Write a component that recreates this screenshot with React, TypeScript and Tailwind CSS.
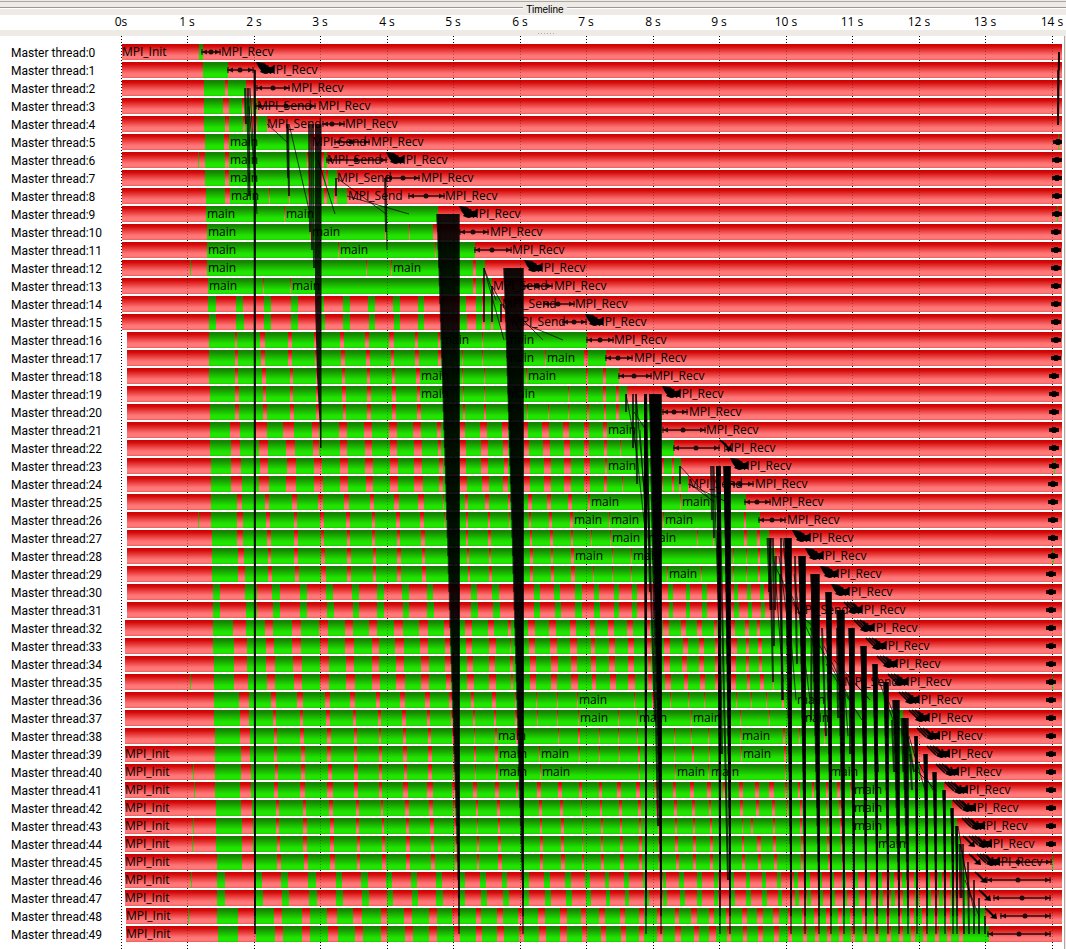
import React from "react";

/* Horizontal chart coordinates run from LEFT to LEFT + WIDTH. */
const LEFT = 121;
const TOP = 36;
const WIDTH = 941;
const HEIGHT = 913;
const ROW = 18;
const BAR = 16;

const rowTop = (r: number) => 44 + r * ROW;
const rowMid = (r: number) => rowTop(r) + 8;
const pct = (x: number) => `${((x - LEFT) / WIDTH) * 100}%`;

type Track = [start: number, computing: string, mpi: string];

const repeat = (from: number, to: number, step: number, width: number) => {
  const out: string[] = [];
  for (let x = from; x < to; x += step) out.push(`${x}-${x + width}`);
  return " " + out.join(" ");
};

/* Per thread: start of the bar, computing intervals, MPI intervals inside them. */
const tracks: Track[] = [
  [122, "199-203", ""],
  [122, "203-228", ""],
  [122, "204-246", "225-228"],
  [122, "204-257", "223-229 242-244 251-253"],
  [122, "204-267", "225-229 243-245 251-257"],
  [122, "205-309 1058-1059", "224-229"],
  [122, "198-199 205-327", "225-229 307-309 321-324"],
  [122, "205-337", "225-229 308-310 321-324 326-328"],
  [122, "206-347", "225-230 269-270 289-290 308-310 324-327 334-337"],
  [122, "206-438 1057-1058", "284-285"],
  [122, "207-433", "310-311 385-386 409-410"],
  [122, "207-475", "338-339 435-436"],
  [122, "190-191 207-485", "366-367 391-392 473-476"],
  [122, "208-492", "263-264 290-291 473-476 482-484"],
  [122, "208-216 236-243 264-271 291-298 321-324 343-350 368-375 393-400 418-424 460-466 476-482 485-491 493-501", ""],
  [122, "209-216 236-244 264-271 291-298 321-325 343-350 369-375 394-400 418-424 460-467 476-482 485-491 493-500", ""],
  [127, "209-587", "235-237 260-265 288-292 314-318 340-344 365-369 389-394 415-418 438-440 482-483"],
  [127, "209-606", "235-238 261-265 288-292 315-317 341-345 366-370 391-394 415-419 438-441 462-463 482-483 545-546 584-588"],
  [127, "209-619", "235-238 262-266 290-293 316-318 342-345 367-370 392-395 416-420 462-463 484-485 526-527 586-588 603-606"],
  [127, "210-627", "235-239 263-266 290-293 316-318 342-346 367-371 392-396 417-420 463-464 484-485 568-569 586-588 603-606 616-619"],
  [127, "210-662", "235-239 263-267 290-294 316-319 343-346 367-371 392-396 417-421 463-465 484-486 527-528 548-549 568-569 587-589 604-606 616-619"],
  [127, "210-662", "230-240 255-267 283-294 312-319 339-347 364-372 389-397 413-421 437-441 460-465 480-487 502-508 522-528 542-549 563-569 584-589 603-607"],
  [127, "210-674", "231-240 259-268 286-295 313-319 340-347 365-372 390-397 414-422 438-441 460-466 481-488 503-508 524-529 543-550 564-570 584-589 604-607 620-621"],
  [127, "211-681 1054-1055", "231-241 260-268 287-296 314-322 340-348 365-373 390-398 414-422 439-443 460-466 481-488 504-508 524-530 544-551 564-571 584-590 605-607 662-664 672-674"],
  [127, "211-688", "231-242 259-269 286-296 314-323 340-348 366-373 390-398 414-423 439-443 460-467 482-489 503-508 524-530 544-551 564-571 584-590 604-607 622-623 662-663 672-674 679-681"],
  [127, "211-746", "237-242 265-269 292-297 318-323 344-349 370-374 394-399 418-424 443-444 465-468 485-489 508-510 528-532 547-551 568-572 588-590 680-681"],
  [127, "198-199 211-760", "237-243 266-270 294-297 320-324 346-350 372-375 396-400 420-424 444-445 466-468 488-490 509-510 529-531 549-552 570-573 609-610 663-664 744-746"],
  [127, "212-769", "237-243 267-271 294-298 321-324 347-350 372-375 397-400 421-425 466-468 488-491 530-532 550-553 571-573 591-592 610-611 697-698 713-714 744-747 757-760"],
  [127, "212-775 1053-1054", "238-244 268-271 294-298 321-325 347-351 373-376 397-401 422-425 467-469 489-491 530-533 551-553 571-574 612-613 631-632 733-734 746-747 758-760"],
  [127, "212-781", "238-245 268-272 295-299 321-326 347-351 373-376 397-401 422-426 468-470 489-492 530-533 551-554 571-575 593-594 612-613 631-632 667-668 701-702 733-734 746-747 758-760"],
  [127, "213-220 245-257 272-280 300-307 326-333 352-359 377-384 402-409 427-433 471-477 492-499 534-540 554-560 575-582 594-599 614-619 632-637 668-673 686-690 702-707 734-738 747-751 760-764", ""],
  [127, "213-220 246-257 273-280 300-307 327-334 353-359 377-384 403-409 427-434 471-478 493-500 534-540 555-561 575-582 594-600 614-619 632-637 669-673 686-690 702-707 734-739 748-752 761-765", ""],
  [125, "213-818", "233-246 265-273 292-301 319-328 345-353 369-377 394-403 419-428 444-450 465-472 488-494 508-511 528-535 549-556 570-576 590-595 608-614 627-633 646-650 663-669 681-686 697-702 714-717 730-735 745-749 757-760"],
  [125, "213-823", "234-247 266-274 292-301 320-328 345-354 372-379 395-404 420-428 445-450 466-472 489-496 510-511 529-535 550-557 570-577 591-595 609-615 628-634 646-651 664-670 683-688 699-704 715-718 731-737 746-749 758-762"],
  [125, "214-828", "234-247 266-275 293-302 320-329 346-354 372-379 396-404 421-429 445-451 467-473 489-495 510-513 530-536 551-558 571-577 591-596 609-615 628-634 648-651 664-670 682-687 699-704 715-719 731-736 746-749 759-762"],
  [125, "190-191 214-840 1052-1053", "234-248 267-275 294-302 320-329 346-355 372-380 396-405 421-429 446-451 467-474 489-496 511-513 530-536 551-557 571-578 592-596 610-616 628-635 648-652 665-671 684-688 700-705 715-720 731-736 747-750 760-764 773-774"],
  [125, "214-888", "239-249 271-276 297-303 325-330 350-355 376-380 400-405 425-430 449-452 471-474 492-496 515-516 536-537 557-558 577-578 634-635 652-654 670-671 688-689 704-705 720-721 736-737 751-752 766-767 782-784"],
  [125, "214-903", "240-249 273-276 300-303 326-330 353-356 378-381 402-406 427-430 451-453 473-475 494-496 515-517 537-538 557-558 578-579 618-619 637-638 691-692 740-741 769-770"],
  [125, "215-909", "240-250 274-277 300-304 327-331 354-357 379-381 403-406 428-431 452-455 474-475 495-497 516-518 558-559 578-580 599-600 618-619 637-638 674-675 691-692 708-709 740-741 783-785 799-800 824-825"],
  [125, "215-913", "241-250 274-277 301-305 327-331 354-357 379-382 403-407 428-432 453-455 474-476 495-498 539-540 579-580 599-600 619-620 638-640 674-675 692-694 709-710 741-742 784-786"],
  [125, "193-194 215-920", "241-251 275-278 301-305 328-332 354-358 379-382 404-407 428-432 453-455 475-476 496-498 540-541 639-640 675-676 708-709 785-786"],
  [125, "194-195 215-944", "240-251 274-278 300-305 327-333 354-358 379-382 403-408 427-433 452-455 473-477 495-499 516-518 537-541 558-562 579-582 599-602 617-621 636-640 655-657 673-676 690-694 707-711 723-725 739-743 755-759 769-774 785-787 798-800 812-814 826-828 837-840 850-851"],
  [125, "216-952", "241-252 276-279 303-306 329-333 356-359 381-383 405-409 429-433 453-455 476-478 497-500 539-542 560-563 581-582 600-602 619-622 638-641 656-658 674-677 692-695 709-711 740-743 756-759 772-775 787-788 800-802 826-827 839-841"],
  [125, "193-194 216-957", "242-253 276-279 303-307 330-334 356-359 382-384 406-409 430-434 454-456 477-478 498-500 540-542 561-564 582-583 601-603 620-622 639-641 658-659 675-677 693-695 710-712 742-743 751-753 773-775 800-802 827-828 840-842"],
  [125, "192-193 216-960", "242-253 277-280 303-307 330-334 357-360 382-385 406-410 431-434 455-457 477-479 498-501 540-543 561-564 582-583 601-603 620-623 639-642 658-659 675-678 693-696 710-713 742-744 757-761 773-776 801-803 827-829 841-843"],
  [125, "217-964 1052-1053", "242-255 277-281 304-308 330-335 357-360 382-386 406-410 431-435 455-457 477-479 498-502 540-543 561-565 582-584 601-604 620-624 639-642 658-659 676-679 693-696 710-713 742-745 758-761 774-777 801-803 828-830 842-844"],
  [125, "191-192 217-225 254-262 281-288 308-316 336-342 361-368 386-392 411-417 436-442 460-465 480-486 502-507 524-529 544-550 565-571 585-590 605-609 624-629 643-647 663-666 679-684 697-702 714-718 731-734 746-750 762-766 777-781" + repeat(794, 966, 12, 4), ""],
  [125, "217-225 254-263 282-289 309-317 336-343 362-369 387-393 412-418 436-443 460-465 481-487 503-509 524-529 545-551 566-572 586-591 606-610 625-629 644-649 663-667 680-685 697-702 714-718 731-735 746-751 762-767 778-782" + repeat(795, 970, 12, 4), ""],
  [126, "188-189 217-985", "238-255 274-282 302-310 327-337 353-362 381-387 404-412 429-437 452-458 476-481 497-503 518-524 538-545 560-567 581-586 599-605 620-625 639-644 657-662 675-679 691-697 709-714 726-731 742-747 757-763 773-779 788-792" + repeat(802, 960, 12, 4)],
  [126, "218-989", "238-256 275-283 302-310 328-338 355-363 381-387 405-413 429-437 454-460 476-482 497-504 519-524 539-546 560-567 582-587 601-606 621-626 639-644 657-663 675-681 694-699 709-716 727-731 743-747 758-763 774-779 788-792" + repeat(803, 965, 12, 4)],
];

const spans = (list: string) =>
  list
    .trim()
    .split(/\s+/)
    .filter(Boolean)
    .map((s) => s.split("-").map(Number) as [number, number]);

const ticks = [121, 187, 254, 320, 387, 453, 520, 586, 653, 719, 786, 852, 919, 985, 1052];

const recvAt = [
  221, 265, 291, 318, 345, 371, 395, 421, 445, 468, 490, 512, 533, 554, 575, 594, 614, 634, 652, 671,
  689, 706, 723, 739, 755, 771, 787, 801, 814, 829, 840, 853, 865, 877, 888, 899, 910, 920, 930, 940,
  949, 958, 966, 975, 982, 990,
];

const sends: [row: number, x: number][] = [
  [3, 257], [4, 267], [5, 312], [6, 327], [7, 337], [8, 348], [13, 493], [14, 502], [15, 511],
  [24, 688], [31, 794], [35, 844],
];

const mains: [row: number, x: number][] = [
  [5, 230], [6, 230], [7, 230], [8, 231], [9, 207], [9, 286], [10, 208], [10, 312], [11, 208],
  [11, 340], [12, 208], [12, 393], [13, 209], [13, 292], [16, 441], [16, 506], [17, 506], [17, 547],
  [18, 421], [18, 528], [19, 421], [19, 507], [21, 608], [23, 608], [25, 591], [25, 682], [26, 574],
  [26, 611], [26, 665], [27, 612], [27, 648], [28, 575], [28, 633], [29, 669], [36, 579], [36, 797],
  [37, 580], [37, 639], [37, 693], [37, 801], [38, 498], [38, 742], [39, 499], [39, 541], [39, 743],
  [40, 499], [40, 542], [40, 677], [40, 711], [40, 830], [41, 854], [42, 854], [43, 854], [44, 878],
];

const labels: [row: number, x: number, text: string][] = [
  [0, 122, "MPI_Init"],
  ...Array.from({ length: 11 }, (_, i): [number, number, string] => [39 + i, i > 8 ? 126 : 125, "MPI_Init"]),
  ...mains.map(([r, x]): [number, number, string] => [r, x, "main"]),
  ...sends.map(([r, x]): [number, number, string] => [r, x, "MPI_Send"]),
  ...recvAt.map((x, r): [number, number, string] => [r, x, "MPI_Recv"]),
];

/* Double-headed markers: row, left tip, dot, right tip. */
const arrows: [number, number, number, number][] = [
  [0, 201, 211, 221], [1, 227, 240, 254], [2, 256, 273, 290], [3, 255, 286, 316], [4, 322, 332, 345],
  [5, 334, 351, 370], [6, 326, 356, 387], [7, 386, 403, 420], [8, 408, 426, 445], [10, 459, 473, 489],
  [11, 474, 492, 512], [13, 523, 537, 553], [14, 543, 558, 575], [15, 562, 574, 587], [16, 586, 600, 614],
  [17, 605, 618, 633], [18, 618, 634, 652], [20, 662, 674, 688], [21, 662, 683, 706], [22, 673, 696, 720],
  [24, 729, 740, 754], [25, 744, 757, 771], [26, 758, 772, 786], [45, 990, 1018, 1052],
  [46, 986, 1018, 1051], [47, 993, 1022, 1051], [48, 1000, 1025, 1051], [49, 987, 1019, 1051],
];

const swarms = [1, 6, 9, 12, 15, 19, 23, ...Array.from({ length: 19 }, (_, i) => 27 + i)];
const singles: [row: number, x: number][] = [
  [22, 720], [44, 963], [45, 969], [46, 975], [47, 979], [48, 985],
];

/* Message bundles: first and last x at the sending row. */
const fans: [row: number, x0: number, x1: number][] = [
  [9, 436, 460], [12, 503, 524], [19, 644, 647], [19, 649, 662], [23, 716, 721], [23, 723, 731],
  [27, 784, 792], [28, 798, 806], [29, 810, 820], [30, 825, 832], [31, 836, 845], [32, 848, 855],
  [33, 860, 867], [34, 872, 878], [35, 883, 889], [36, 892, 900], [37, 901, 909], [38, 914, 918],
  [39, 923, 928], [40, 932, 937], [41, 942, 946], [42, 950, 954], [43, 955, 958],
];

/* Single messages: x1, y1, x2, y2, stroke width. */
const messages: [number, number, number, number, number][] = [
  [254.5, 70, 255, 916, 2], [255, 70, 255, 934, 2],
  [245, 88, 246, 124, 2], [248, 88, 249, 196, 3], [250, 88, 257, 214, 1], [249, 106, 255, 180, 1],
  [267, 124, 287, 142, 1], [287, 124, 288, 178, 2], [288, 124, 289, 196, 2], [289, 124, 310, 214, 1],
  [309, 124, 310, 232, 2], [311, 124, 312, 250, 2], [313, 124, 314, 268, 2], [318, 160, 335, 214, 1],
  [336, 178, 336, 196, 2], [337, 178, 386, 214, 1], [347, 196, 409, 214, 1], [385, 178, 386, 232, 2],
  [386, 178, 387, 250, 1],
  [484, 268, 484, 322, 2], [484, 268, 504, 340, 1], [484, 268, 496, 300, 1], [492, 286, 492, 322, 2],
  [492, 286, 512, 322, 1], [501, 304, 501, 322, 2], [515, 312, 543, 340, 1], [520, 322, 563, 340, 1],
  [503, 304, 520, 330, 1],
  [626, 394, 626, 412, 2], [626, 394, 636, 448, 1], [633, 394, 633, 448, 2], [636, 394, 637, 484, 2],
  [634, 412, 646, 430, 1], [634, 430, 646, 538, 1], [636, 394, 645, 502, 1], [640, 430, 647, 538, 1],
  [645, 394, 655, 720, 2], [646, 394, 650, 592, 2], [650, 394, 658, 826, 2],
  [680, 466, 680, 484, 2], [680, 466, 711, 500, 1], [688, 484, 727, 502, 1], [690, 484, 714, 502, 1],
  [711, 466, 712, 520, 2], [713, 466, 714, 538, 2], [714, 466, 718, 600, 1],
  [717, 466, 722, 754, 2], [719, 466, 728, 880, 2],
  [768, 538, 771, 610, 3], [770, 538, 773, 682, 2], [773, 538, 774, 646, 2], [771, 538, 769, 592, 2],
  [774, 556, 783, 682, 1], [776, 556, 775, 610, 2], [781, 538, 782, 700, 2], [783, 538, 796, 700, 1],
  [780, 574, 783, 700, 2], [779, 556, 790, 640, 1], [795, 556, 797, 664, 2], [794, 574, 810, 700, 1],
  [775, 566, 797, 610, 1], [790, 592, 812, 640, 1], [795, 610, 815, 628, 1], [810, 628, 842, 686, 1],
  [812, 592, 811, 720, 2], [822, 628, 826, 736, 2], [824, 646, 850, 700, 1], [826, 664, 862, 720, 1],
  [837, 628, 838, 718, 2], [839, 610, 848, 736, 1], [834, 660, 870, 700, 1], [848, 676, 870, 700, 1],
  [850, 640, 850, 754, 2], [862, 680, 864, 754, 2], [874, 690, 878, 772, 2], [873, 664, 893, 720, 1],
  [884, 690, 900, 730, 1], [892, 720, 894, 772, 2], [901, 718, 903, 772, 1], [904, 718, 914, 772, 2],
  [909, 736, 925, 790, 1], [914, 754, 933, 790, 1], [910, 754, 912, 790, 2], [918, 772, 936, 790, 1],
  [960, 844, 961, 898, 3], [963, 844, 964, 934, 2], [968, 862, 969, 934, 2], [974, 880, 974, 934, 2],
  [979, 898, 979, 934, 2], [985, 916, 985, 934, 2], [958, 826, 970, 898, 1], [960, 844, 975, 916, 1],
  [965, 880, 979, 916, 1],
  [1059, 52, 1059, 70, 2], [1058, 70, 1058, 125, 2], [1059, 52, 1058, 125, 2],
];

function Bars() {
  return (
    <g shapeRendering="crispEdges">
      {tracks.map(([start, computing, mpi], r) => (
        <g key={r}>
          <rect x={start} y={rowTop(r)} width={1062 - start} height={BAR} fill="url(#mpi)" />
          {spans(computing).map(([a, b], i) => (
            <rect key={i} x={a} y={rowTop(r)} width={b - a} height={BAR} fill="url(#computing)" />
          ))}
          {spans(mpi).map(([a, b], i) => (
            <rect key={i} x={a} y={rowTop(r)} width={b - a} height={BAR} fill="url(#mpi)" />
          ))}
        </g>
      ))}
    </g>
  );
}

function Grid({ opacity }: { opacity: number }) {
  return (
    <g shapeRendering="crispEdges" fill="none" stroke="black" strokeDasharray="1 2" opacity={opacity}>
      {ticks.map((x) => (
        <path key={x} d={`M${x + 0.5} ${TOP}V${TOP + HEIGHT}`} />
      ))}
    </g>
  );
}

function Fan({ row, x0, x1 }: { row: number; x0: number; x1: number }) {
  const count = 49 - row;
  return (
    <g stroke="black" strokeWidth="2" strokeOpacity="0.52">
      {Array.from({ length: count }, (_, i) => {
        const t = count > 1 ? i / (count - 1) : 1;
        const x = x0 + 1 + (x1 - x0 - 2) * t;
        return <path key={i} d={`M${x} ${rowMid(row)}L${Math.min(x + 1, x1 - 1)} ${rowMid(row + i + 1)}`} />;
      })}
    </g>
  );
}

function Arrow({ row, a, dot, b }: { row: number; a: number; dot: number; b: number }) {
  const y = rowMid(row);
  return (
    <g opacity="0.85">
      <path d={`M${a} ${y}H${b}`} stroke="black" strokeWidth="1.5" />
      <path d={`M${a + 1} ${y}l5 -2.5v5zM${b - 1} ${y}l-5 -2.5v5z`} />
      <path d={`M${a + 1} ${y - 3}v6M${b - 1} ${y - 3}v6`} stroke="black" strokeWidth="1.5" strokeOpacity="0.7" />
      <circle cx={dot} cy={y} r="2.5" />
    </g>
  );
}

function Swarm({ row }: { row: number }) {
  const y = rowMid(row);
  const x = recvAt[row] - (row < 32 ? 9 : row < 38 ? 11 : 13);
  const head = row < 32 ? 4 : row < 38 ? 6 : 9;
  return (
    <g>
      {row < 31 ? (
        <path d={`M${x} ${y - 8}l8 1l6 5v5h-7l-4 -5z`} />
      ) : (
        <path
          d={`M${x} ${y - 8}l9 9M${x + 3} ${y - 8}l8 8M${x + 6} ${y - 8}l8 8M${x + 9} ${y - 7}l7 7`}
          stroke="black"
          strokeWidth="1.7"
        />
      )}
      <path d={`M${x + head} ${y + 2}l4 -5h6l4 -1v7h-5l-4 1z`} />
    </g>
  );
}

function Single({ row, x }: { row: number; x: number }) {
  const y = rowMid(row);
  return (
    <g>
      <path d={`M${x} ${y - 8}l9 9M${x + 2} ${y - 7}l7 7`} stroke="black" strokeWidth="1.4" />
      <path d={`M${x + 5} ${y + 2}l6 -5l1 6z`} />
    </g>
  );
}

function Finish({ row }: { row: number }) {
  const x = row < 6 ? 1058 : row < 10 ? 1057 : row < 18 ? 1056 : row < 24 ? 1054 : row < 29 ? 1053 : 1051;
  const y = rowMid(row);
  return (
    <g>
      <path d={`M${x - 5} ${y - 2}h10v4h-10z`} fillOpacity="0.85" />
      <path d={`M${x - 4} ${y}l3 -3v6zM${x + 4} ${y}l-3 -3v6z`} />
      <circle cx={x} cy={y} r="3" />
    </g>
  );
}

export default function App() {
  return (
    <div className="flex min-h-screen flex-col bg-white font-['Open_Sans','DejaVu_Sans',sans-serif] text-[12px] text-black">
      <header className="bg-[#eeebe7]">
        <div className="h-[2px] border-b border-[#aca9a5]" />
        <div className="flex h-[13px] items-start gap-[3px]">
          <span className="mt-[5px] h-[2px] flex-[524] border-b border-t border-b-white border-t-[#989898]" />
          <h1 className="font-['Liberation_Sans',sans-serif] text-[10px] leading-[15px]">Timeline</h1>
          <span className="mt-[5px] h-[2px] flex-[500] border-b border-t border-b-white border-t-[#989898]" />
        </div>
      </header>

      <div className="flex h-[15px] bg-white">
        <div className="w-[121px] shrink-0" />
        <div className="relative flex-1">
          {ticks.map((x, i) => (
            <span
              key={x}
              className="absolute top-0 -ml-5 w-10 text-center leading-[14px] whitespace-nowrap"
              style={{ left: pct(x) }}
            >
              {i === 0 ? "0s" : `${i} s`}
            </span>
          ))}
        </div>
        <div className="w-[4px] shrink-0" />
      </div>

      <div className="flex h-[6px] items-center justify-center gap-[2px] bg-[#eeebe7] pl-[25px]">
        {[0, 1, 2, 3, 4, 5].map((i) => (
          <span key={i} className="size-px bg-[#aaa]" />
        ))}
      </div>

      <main className="flex flex-1">
        <ol className="w-[121px] shrink-0 pt-2 pl-[11px] font-['Roboto',sans-serif]">
          {tracks.map((_, r) => (
            <li key={r} className="h-[18px] leading-[18px] whitespace-nowrap">
              Master thread:{r}
            </li>
          ))}
        </ol>

        <div className="relative h-[913px] flex-1">
          <svg
            className="block h-[913px] w-full"
            viewBox={`${LEFT} ${TOP} ${WIDTH} ${HEIGHT}`}
            preserveAspectRatio="none"
            aria-hidden="true"
          >
            <defs>
              <linearGradient id="mpi" x1="0" y1="0" x2="0" y2="1">
                <stop offset="0" stopColor="#cc0000" />
                <stop offset="0.15" stopColor="#d40a0a" />
                <stop offset="0.7" stopColor="#ff7474" />
                <stop offset="0.88" stopColor="#ff7c7c" />
                <stop offset="1" stopColor="#ee5c5c" />
              </linearGradient>
              <linearGradient id="computing" x1="0" y1="0" x2="0" y2="1">
                <stop offset="0" stopColor="#148000" />
                <stop offset="0.15" stopColor="#168a00" />
                <stop offset="0.7" stopColor="#20e000" />
                <stop offset="0.88" stopColor="#22e800" />
                <stop offset="1" stopColor="#1ecc00" />
              </linearGradient>
            </defs>
            <Grid opacity={1} />
            <Bars />
            <Grid opacity={0.3} />
            <g stroke="black" strokeOpacity="0.72">
              {messages.map(([x1, y1, x2, y2, w], i) => (
                <line key={i} x1={x1} y1={y1} x2={x2} y2={y2} strokeWidth={w} />
              ))}
              <path d="M315 124V300L317 376L320 430V448H321.5V124Z" fill="black" fillOpacity="0.85" strokeWidth="0" />
            </g>
            {fans.map(([row, x0, x1], i) => (
              <Fan key={i} row={row} x0={x0} x1={x1} />
            ))}
            {arrows.map(([row, a, dot, b]) => (
              <Arrow key={row} row={row} a={a} dot={dot} b={b} />
            ))}
            {swarms.map((row) => (
              <Swarm key={row} row={row} />
            ))}
            {singles.map(([row, x]) => (
              <Single key={row} row={row} x={x} />
            ))}
            {Array.from({ length: 40 }, (_, i) => (
              <Finish key={i} row={i + 5} />
            ))}
          </svg>
          {labels.map(([row, x, text], i) => (
            <span
              key={i}
              className="absolute leading-[16px] whitespace-nowrap"
              style={{ left: pct(x), top: rowTop(row) - TOP }}
            >
              {text}
            </span>
          ))}
        </div>

        <div className="ml-[2px] w-[2px] shrink-0 border-l border-[#aca9a5] bg-[#eeebe7]" />
      </main>
    </div>
  );
}
